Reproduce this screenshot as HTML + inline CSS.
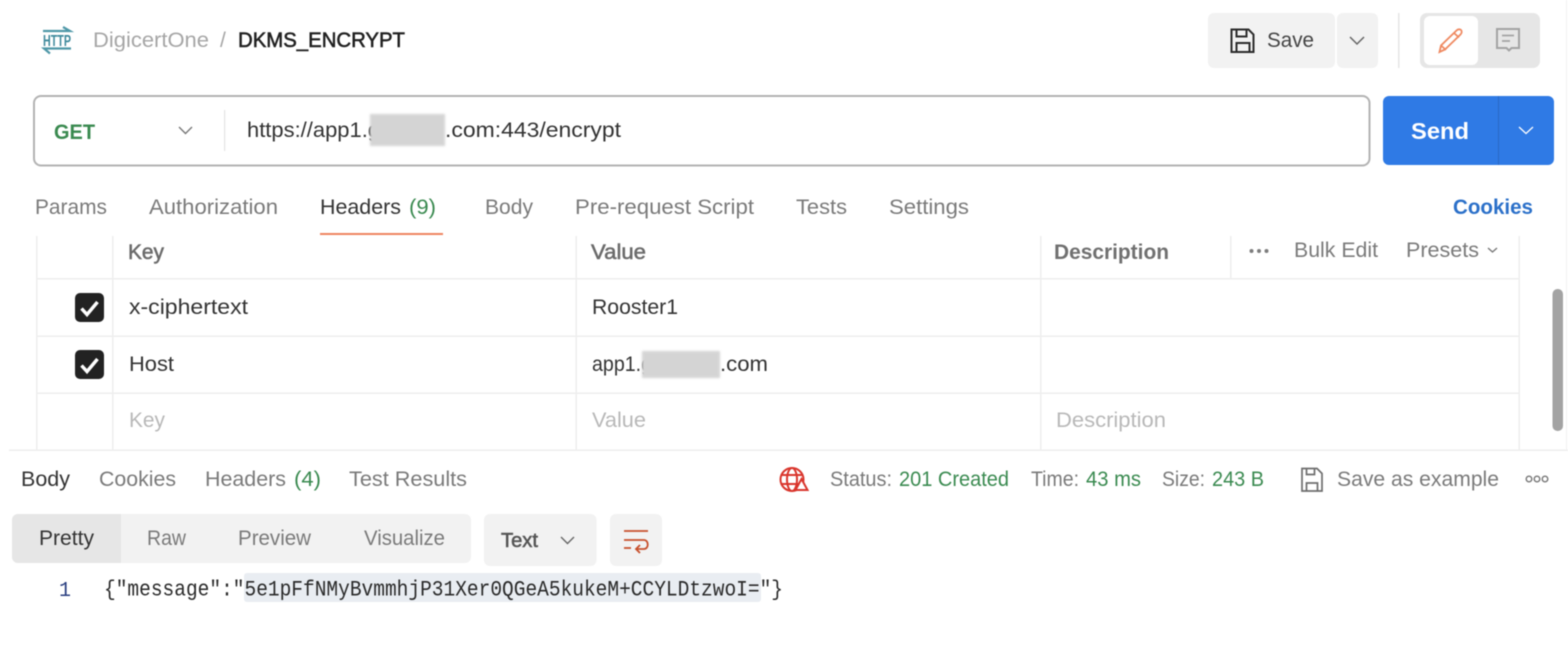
<!DOCTYPE html>
<html><head><meta charset="utf-8"><style>
html,body{margin:0;padding:0;background:#fff;width:1568px;height:654px;overflow:hidden}
svg{display:block}
text{font-family:"Liberation Sans",sans-serif;font-size:21px;fill:#6b6b6b}
.d{fill:#212121}.g{fill:#3a8a50}.p{fill:#b8b8b8}.m{fill:#7a7a7a}
.b{font-weight:bold}
.md{stroke-width:.55px}
.mono{font-family:"Liberation Mono",monospace;font-size:22px;fill:#2a2a2a}
</style></head><body>
<svg width="1568" height="654" viewBox="0 0 1568 654" xmlns="http://www.w3.org/2000/svg" style="filter:blur(.45px)">
<defs><filter id="r" x="-10%" y="-10%" width="120%" height="120%"><feGaussianBlur stdDeviation="1"/></filter></defs>
<!-- HTTP icon -->
<g stroke="#4f98a8" fill="none" stroke-width="2.200">
<path d="M43 31H70L63 27"/><path d="M71 48.500H44L50 53.500"/>
</g>
<text x="43" y="46" textLength="28" lengthAdjust="spacingAndGlyphs" style="font-size:15.500px;fill:#3f8a9c;font-weight:bold">HTTP</text>
<text x="93" y="47" textLength="116" lengthAdjust="spacingAndGlyphs" style="fill:#a6a6a6">DigicertOne</text>
<text x="220" y="47" style="fill:#a6a6a6">/</text>
<text x="238" y="47" class="d md" stroke="#212121" textLength="167" lengthAdjust="spacingAndGlyphs">DKMS_ENCRYPT</text>
<!-- Save -->
<rect x="1208" y="13" width="127" height="55" rx="6" fill="#f2f2f2"/>
<rect x="1337" y="13" width="41" height="55" rx="6" fill="#f2f2f2"/>
<path d="M1231.500 29.500h17l5 5v17.500h-22z M1236.500 29.500v7h10v-7 M1236.500 52v-9h13v9" fill="none" stroke="#2b2b2b" stroke-width="2"/>
<text x="1267" y="47" textLength="47" lengthAdjust="spacingAndGlyphs" style="fill:#444">Save</text>
<path d="M1350 37l7 7 7-7" fill="none" stroke="#666" stroke-width="1.500"/>
<rect x="1398" y="13" width="1.500" height="55" fill="#e6e6e6"/>
<rect x="1420" y="13" width="120" height="55" rx="7" fill="#e6e6e6"/>
<rect x="1424" y="16" width="54" height="49" rx="6" fill="#fff"/>
<path d="M1439.500 52l1.500-6.500 15.500-15c1.500-1.500 3.500-1.500 4.500-.5s1 3-.5 4.500l-15.500 15z M1441 45.500l5 4.500 M1454 33l5 4.500" fill="none" stroke="#ef8a62" stroke-width="1.800"/>
<path d="M1497 29h22v19h-7.500l-2.500 2.500-2.500-2.500h-9.500z" fill="none" stroke="#a3a3a3" stroke-width="2"/>
<path d="M1502 35.500h12M1502 41h8" stroke="#a3a3a3" stroke-width="1.800"/>
<!-- URL -->
<rect x="34" y="96" width="1335.500" height="69.500" rx="7" fill="#fff" stroke="#b3b3b3" stroke-width="2"/>
<text x="54" y="139" class="g b" textLength="41" lengthAdjust="spacingAndGlyphs">GET</text>
<path d="M179 127l6.500 6.500 6.500-6.500" fill="none" stroke="#777" stroke-width="1.400"/>
<rect x="224" y="110" width="1.200" height="41" fill="#e4e4e4"/>
<text x="247" y="137" textLength="133" lengthAdjust="spacingAndGlyphs" style="fill:#333">https://app1.g</text>
<text x="445" y="137" textLength="176" lengthAdjust="spacingAndGlyphs" style="fill:#333">.com:443/encrypt</text>
<rect x="370" y="114" width="75" height="32" fill="#d4d4d4" filter="url(#r)"/>
<!-- Send -->
<rect x="1383" y="96" width="171" height="69" rx="6" fill="#2f7ae5"/>
<rect x="1498" y="96" width="1" height="69" fill="#2a69c4"/>
<text x="1411" y="139" textLength="58" lengthAdjust="spacingAndGlyphs" style="fill:#fff;font-weight:bold;font-size:23px">Send</text>
<path d="M1519 127l7 6.500 7-6.500" fill="none" stroke="#fff" stroke-width="1.300"/>
<!-- Tabs -->
<text x="35" y="214" class="m" textLength="72" lengthAdjust="spacingAndGlyphs">Params</text>
<text x="149" y="214" class="m" textLength="129" lengthAdjust="spacingAndGlyphs">Authorization</text>
<text x="320" y="214" textLength="81" lengthAdjust="spacingAndGlyphs" style="fill:#333">Headers</text>
<text x="409" y="214" class="g" textLength="27" lengthAdjust="spacingAndGlyphs">(9)</text>
<rect x="320" y="233" width="123" height="2" fill="#ee8460"/>
<text x="485" y="214" class="m" textLength="48" lengthAdjust="spacingAndGlyphs">Body</text>
<text x="575" y="214" class="m" textLength="179" lengthAdjust="spacingAndGlyphs">Pre-request Script</text>
<text x="796" y="214" class="m" textLength="51" lengthAdjust="spacingAndGlyphs">Tests</text>
<text x="889" y="214" class="m" textLength="80" lengthAdjust="spacingAndGlyphs">Settings</text>
<text x="1453" y="214" textLength="80" lengthAdjust="spacingAndGlyphs" style="fill:#2b70c9;font-weight:bold">Cookies</text>
<!-- Table lines -->
<g fill="#eeeeee">
<rect x="36" y="236" width="1.500" height="214"/>
<rect x="112" y="236" width="1.500" height="214"/>
<rect x="575.500" y="236" width="1.500" height="214"/>
<rect x="1040" y="236" width="1.500" height="214"/>
<rect x="1230" y="236" width="1.500" height="42"/>
<rect x="1518.500" y="236" width="1.500" height="214"/>
<rect x="36" y="278" width="1484" height="1.500"/>
<rect x="36" y="335.500" width="1484" height="1.500"/>
<rect x="36" y="392.500" width="1484" height="1.500"/>
<rect x="9" y="449.500" width="1559" height="1.500"/>
<rect x="1566" y="0" width="1" height="450" fill="#f2f2f2"/>
</g>
<text x="128" y="259" class="md" stroke="#6b6b6b" textLength="36" lengthAdjust="spacingAndGlyphs">Key</text>
<text x="591" y="259" class="md" stroke="#6b6b6b" textLength="55" lengthAdjust="spacingAndGlyphs">Value</text>
<text x="1054" y="259" class="b" textLength="115" lengthAdjust="spacingAndGlyphs" style="fill:#707070">Description</text>
<g fill="#7d7d7d"><circle cx="1251.500" cy="251" r="2"/><circle cx="1259" cy="251" r="2"/><circle cx="1266.500" cy="251" r="2"/></g>
<text x="1294" y="257" class="m" textLength="84" lengthAdjust="spacingAndGlyphs">Bulk Edit</text>
<text x="1406" y="257" class="m" textLength="73" lengthAdjust="spacingAndGlyphs">Presets</text>
<path d="M1488 248l4.500 4 4.500-4" fill="none" stroke="#777" stroke-width="1.400"/>
<!-- Rows -->
<rect x="75" y="293" width="29" height="29" rx="5" fill="#222"/>
<path d="M81.500 308.500l5.500 6 10.500-12.500" fill="none" stroke="#fff" stroke-width="3.400"/>
<rect x="75" y="350" width="29" height="29" rx="5" fill="#222"/>
<path d="M81.500 365.500l5.500 6 10.500-12.500" fill="none" stroke="#fff" stroke-width="3.400"/>
<text x="129" y="314" textLength="119" lengthAdjust="spacingAndGlyphs" style="fill:#333">x-ciphertext</text>
<text x="592" y="314" textLength="86" lengthAdjust="spacingAndGlyphs" style="fill:#333">Rooster1</text>
<text x="129" y="371" textLength="45" lengthAdjust="spacingAndGlyphs" style="fill:#333">Host</text>
<text x="592" y="371" textLength="60" lengthAdjust="spacingAndGlyphs" style="fill:#333">app1.g</text>
<text x="720" y="371" textLength="48" lengthAdjust="spacingAndGlyphs" style="fill:#333">.com</text>
<rect x="642" y="351" width="78" height="27" fill="#d4d4d4" filter="url(#r)"/>
<text x="129" y="427" class="p" textLength="36" lengthAdjust="spacingAndGlyphs">Key</text>
<text x="592" y="427" class="p" textLength="54" lengthAdjust="spacingAndGlyphs">Value</text>
<text x="1056" y="427" class="p" textLength="110" lengthAdjust="spacingAndGlyphs">Description</text>
<!-- Scrollbar -->
<rect x="1552.500" y="289" width="10.500" height="142" rx="5" fill="#a3a3a3"/>
<!-- Response tabs -->
<text x="21" y="486" textLength="49" lengthAdjust="spacingAndGlyphs" style="fill:#333">Body</text>
<text x="99" y="486" class="m" textLength="77" lengthAdjust="spacingAndGlyphs">Cookies</text>
<text x="205" y="486" class="m" textLength="81" lengthAdjust="spacingAndGlyphs">Headers</text>
<text x="294" y="486" class="g" textLength="27" lengthAdjust="spacingAndGlyphs">(4)</text>
<text x="349" y="486" class="m" textLength="118" lengthAdjust="spacingAndGlyphs">Test Results</text>
<!-- Status -->
<g fill="none" stroke="#d9352c" stroke-width="2">
<circle cx="792" cy="479.500" r="11.500"/>
<ellipse cx="792" cy="479.500" rx="5" ry="11.500"/>
<path d="M781.500 475h21M781.500 484h21"/>
<path d="M801.500 479l6 11h-12z" fill="#fff"/>
</g>
<text x="830" y="486" class="m" textLength="62" lengthAdjust="spacingAndGlyphs">Status:</text>
<text x="899" y="486" class="g" textLength="110" lengthAdjust="spacingAndGlyphs">201 Created</text>
<text x="1031" y="486" class="m" textLength="48" lengthAdjust="spacingAndGlyphs">Time:</text>
<text x="1086" y="486" class="g" textLength="55" lengthAdjust="spacingAndGlyphs">43 ms</text>
<text x="1162" y="486" class="m" textLength="43" lengthAdjust="spacingAndGlyphs">Size:</text>
<text x="1212" y="486" class="g" textLength="52" lengthAdjust="spacingAndGlyphs">243 B</text>
<path d="M1302 468.500h15l5 5v17.500h-20z M1306.500 468.500v6h8v-6 M1306.500 491v-8h11v8" fill="none" stroke="#6d6d6d" stroke-width="1.700"/>
<text x="1337" y="486" class="m" textLength="162" lengthAdjust="spacingAndGlyphs">Save as example</text>
<g fill="none" stroke="#777" stroke-width="1.400"><circle cx="1529" cy="479" r="2.800"/><circle cx="1537" cy="479" r="2.800"/><circle cx="1545" cy="479" r="2.800"/></g>
<!-- Body toolbar -->
<rect x="12" y="514" width="459" height="49" rx="6" fill="#f2f2f2"/>
<path d="M18 514h103v49H18a6 6 0 0 1-6-6v-37a6 6 0 0 1 6-6z" fill="#e6e6e6"/>
<text x="39" y="545" textLength="55" lengthAdjust="spacingAndGlyphs" style="fill:#333">Pretty</text>
<text x="147" y="545" class="m" textLength="39" lengthAdjust="spacingAndGlyphs">Raw</text>
<text x="238" y="545" class="m" textLength="73" lengthAdjust="spacingAndGlyphs">Preview</text>
<text x="364" y="545" class="m" textLength="81" lengthAdjust="spacingAndGlyphs">Visualize</text>
<rect x="484" y="514" width="112.500" height="52" rx="6" fill="#f2f2f2"/>
<text x="501" y="547" class="md" stroke="#555" textLength="37" lengthAdjust="spacingAndGlyphs" style="fill:#555;font-size:20px">Text</text>
<path d="M561 537l6.500 6.500 6.500-6.500" fill="none" stroke="#666" stroke-width="1.400"/>
<rect x="610" y="514" width="52" height="52" rx="6" fill="#f2f2f2"/>
<g fill="none" stroke="#c8502c" stroke-width="1.800">
<path d="M624 531h24M624 548h7M624 540h20c5 0 5 9 0 9h-8"/>
<path d="M640 545l-4 4 4 4"/>
</g>
<!-- Code -->
<text x="59" y="596" textLength="12" lengthAdjust="spacingAndGlyphs" style="fill:#2a3f80;font-family:'Liberation Mono',monospace">1</text>
<rect x="244" y="573" width="517" height="29" rx="3" fill="#e9edf2"/>
<text x="104" y="595.500" class="mono" textLength="679" lengthAdjust="spacingAndGlyphs">{"message":"5e1pFfNMyBvmmhjP31Xer0QGeA5kukeM+CCYLDtzwoI="}</text>
</svg>
</body></html>
